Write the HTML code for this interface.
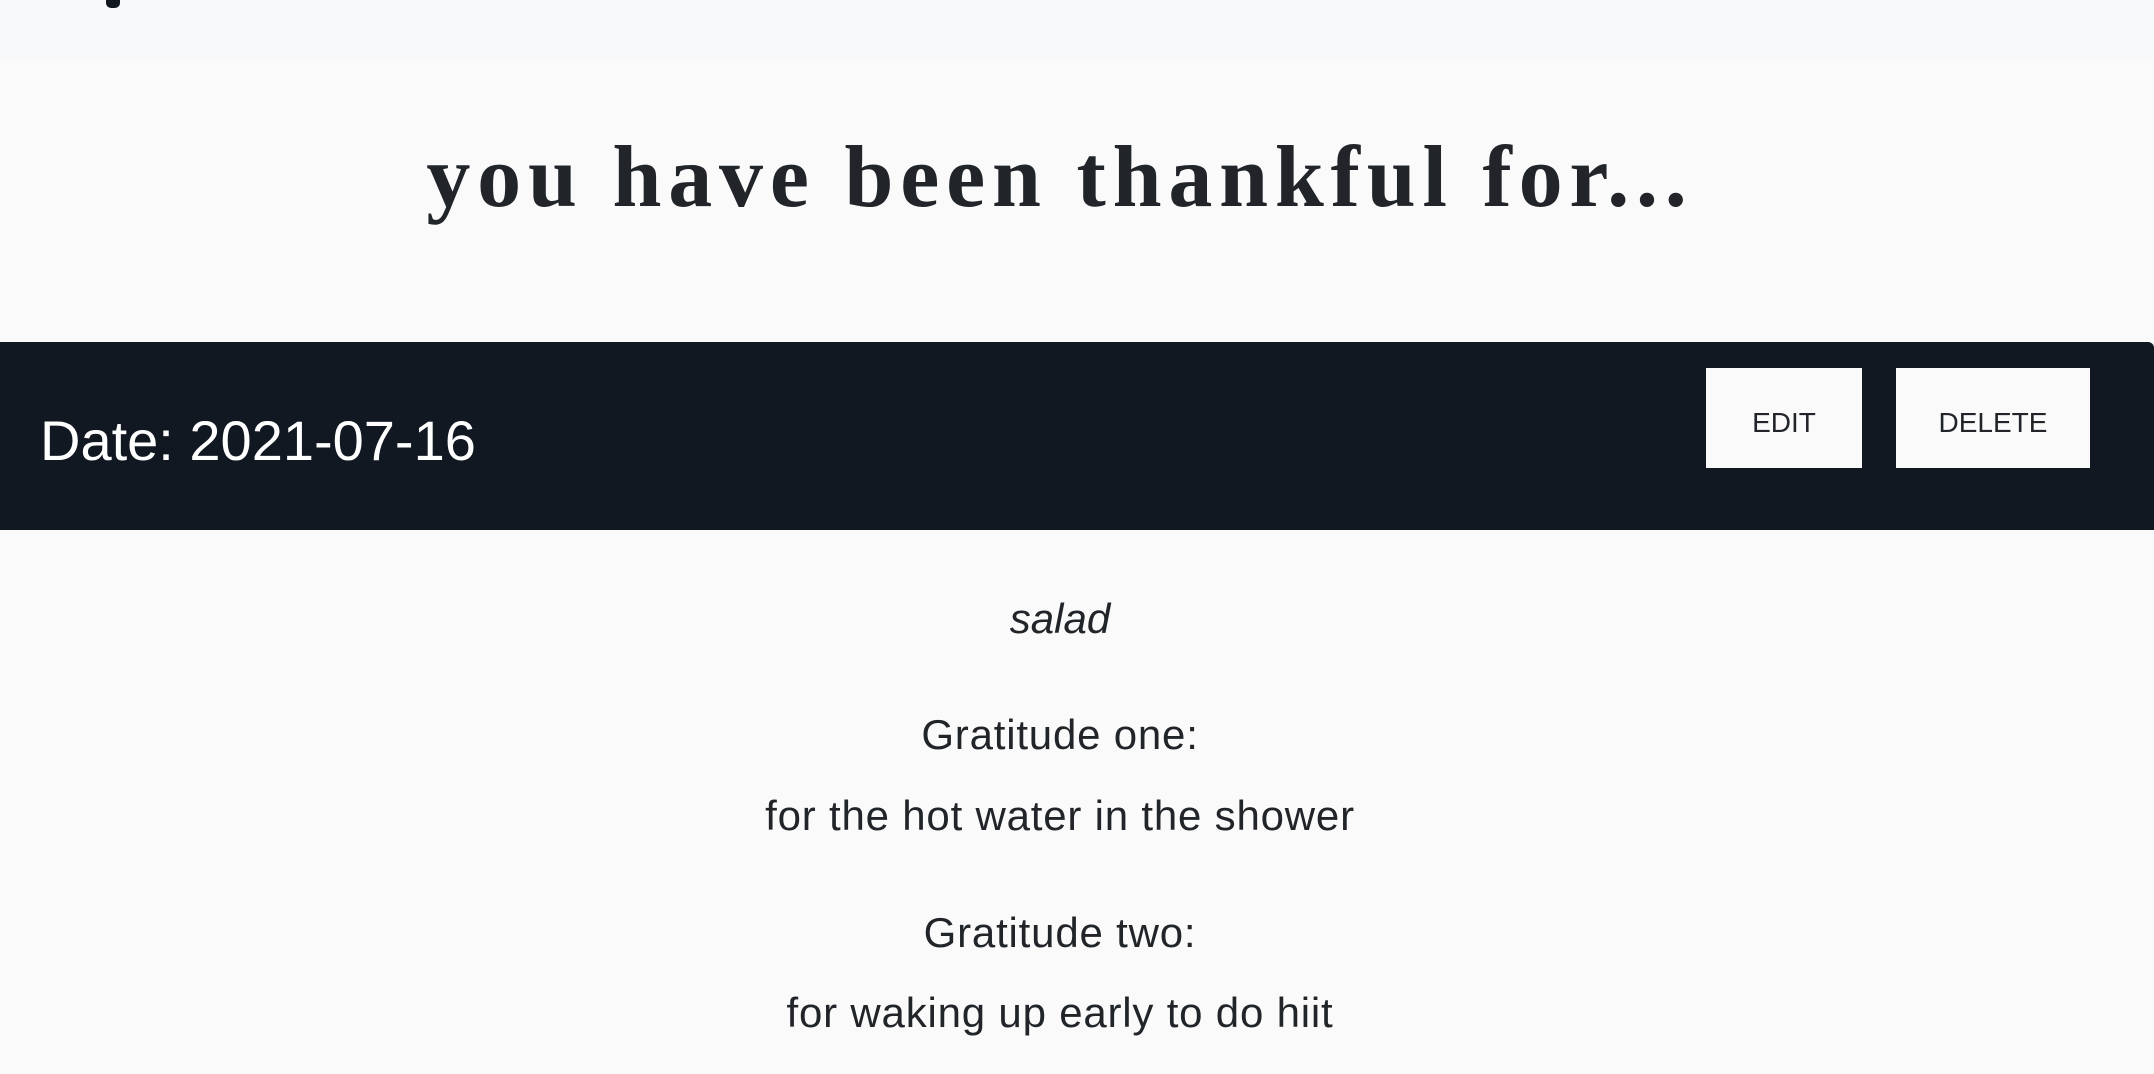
<!DOCTYPE html>
<html><head><meta charset="utf-8"><style>
*{margin:0;padding:0;box-sizing:border-box}
html,body{width:2154px;height:1074px;overflow:hidden;background:#fafafa;font-family:"Liberation Sans",sans-serif;color:#212529}
.top{position:absolute;left:0;top:0;width:2154px;height:60px;background:#f8f9fa}
.mark{position:absolute;left:106px;top:0;width:14px;height:8px;background:#111822;border-radius:0 0 5px 5px}
.t{position:absolute;white-space:nowrap;line-height:1}
h1{position:absolute;left:0;width:2120px;top:134px;text-align:center;font-family:"Liberation Serif",serif;font-weight:bold;font-size:88px;letter-spacing:6.8px;line-height:1;color:#212529}
.bar{position:absolute;left:0;top:342px;width:2154px;height:188px;background:#111822;border-top-right-radius:6px}
.btn{position:absolute;top:368px;height:100px;background:#fafafa;color:#212529;font-size:28px;text-align:center;line-height:110px}
.c{left:0;width:2120px;text-align:center;letter-spacing:0.8px}
</style></head><body>
<div class="top"><div class="mark"></div></div>
<h1>you have been thankful for...</h1>
<div class="bar"></div>
<div class="t" style="left:40px;top:413px;font-size:56px;color:#fff">Date: 2021-07-16</div>
<div class="btn" style="left:1706px;width:156px">EDIT</div>
<div class="btn" style="left:1896px;width:194px">DELETE</div>
<div class="t c" style="top:598px;font-size:42px;font-style:italic;letter-spacing:0">salad</div>
<div class="t c" style="top:714px;font-size:42px">Gratitude one:</div>
<div class="t c" style="top:795px;font-size:42px">for the hot water in the shower</div>
<div class="t c" style="top:912px;font-size:42px">Gratitude two:</div>
<div class="t c" style="top:992px;font-size:42px">for waking up early to do hiit</div>
</body></html>
